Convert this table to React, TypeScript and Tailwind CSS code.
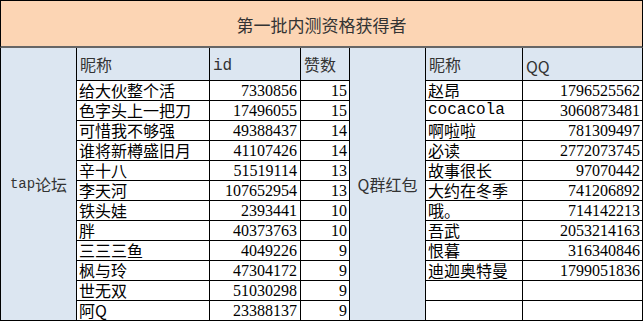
const tapRows: [string, string, string][] = [
  ["给大伙整个活", "7330856", "15"],
  ["色字头上一把刀", "17496055", "15"],
  ["可惜我不够强", "49388437", "14"],
  ["谁将新樽盛旧月", "41107426", "14"],
  ["辛十八", "51519114", "13"],
  ["李天河", "107652954", "13"],
  ["铁头娃", "2393441", "10"],
  ["胖", "40373763", "10"],
  ["三三三鱼", "4049226", "9"],
  ["枫与玲", "47304172", "9"],
  ["世无双", "51030298", "9"],
  ["阿Q", "23388137", "9"],
];

const qqRows: [string, string][] = [
  ["赵昂", "1796525562"],
  ["cocacola", "3060873481"],
  ["啊啦啦", "781309497"],
  ["必读", "2772073745"],
  ["故事很长", "97070442"],
  ["大约在冬季", "741206892"],
  ["哦。", "714142213"],
  ["吾武", "2053214163"],
  ["恨暮", "316340846"],
  ["迪迦奥特曼", "1799051836"],
  ["", ""],
  ["", ""],
];

const cjk = "font-['Noto_Sans_CJK_SC',sans-serif]";
const mono = "font-['Liberation_Mono','Noto_Sans_CJK_SC',monospace]";
const num = "font-['Liberation_Serif',serif]";

const head = `bg-[#DCE6F1] border-r border-b border-black flex items-center pl-[3px] text-[16px] text-[#333]`;
const cell = `bg-white border-r border-b border-black flex items-end whitespace-nowrap leading-[19px] text-[16px] text-black`;

export default function App() {
  return (
    <div className="w-[643px] h-[322px] bg-white overflow-hidden">
      <div className={`h-[48px] bg-[#FCD5B4] border-t border-l border-r border-black border-b-2 border-b-[#666] flex items-center justify-center pt-[3px] text-[17px] text-[#333] ${cjk}`}>
        第一批内测资格获得者
      </div>
      <div className="grid grid-cols-[77px_133px_91px_49px_76px_97px_120px] grid-rows-[33px_repeat(12,20px)]">
        <div className={`col-start-1 row-start-1 row-span-13 bg-[#DCE6F1] border-l border-r border-b border-black flex items-center justify-center text-[16px] text-[#333] ${cjk}`}>
          <span className={`${mono} text-[14px]`}>tap</span>论坛
        </div>
        <div className={`col-start-5 row-start-1 row-span-13 bg-[#DCE6F1] border-r border-b border-black flex items-center justify-center text-[16px] text-[#333] ${cjk}`}>
          Q群红包
        </div>

        <div className={`${head} ${cjk}`}>昵称</div>
        <div className={`${head} ${mono} text-[14px] pt-[4px]`}>id</div>
        <div className={`${head} ${cjk}`}>赞数</div>
        <div className={`${head} ${cjk}`}>昵称</div>
        <div className={`${head} ${cjk} text-[13px] pt-[3px]`}>QQ</div>

        {tapRows.map((r, i) => {
          const q = qqRows[i];
          const latin = /^[a-z]+$/.test(q[0]);
          return [
            <div key={`n${i}`} className={`${cell} pl-[2px] ${cjk}`}>{r[0]}</div>,
            <div key={`i${i}`} className={`${cell} justify-end pr-[3px] ${num}`}>{r[1]}</div>,
            <div key={`z${i}`} className={`${cell} justify-end pr-[2px] ${num}`}>{r[2]}</div>,
            <div key={`q${i}`} className={`${cell} pl-[2px] ${latin ? `${mono} text-[14px]` : cjk}`}>{q[0]}</div>,
            <div key={`k${i}`} className={`${cell} justify-end pr-[2px] ${num}`}>{q[1]}</div>,
          ];
        })}
      </div>
    </div>
  );
}
